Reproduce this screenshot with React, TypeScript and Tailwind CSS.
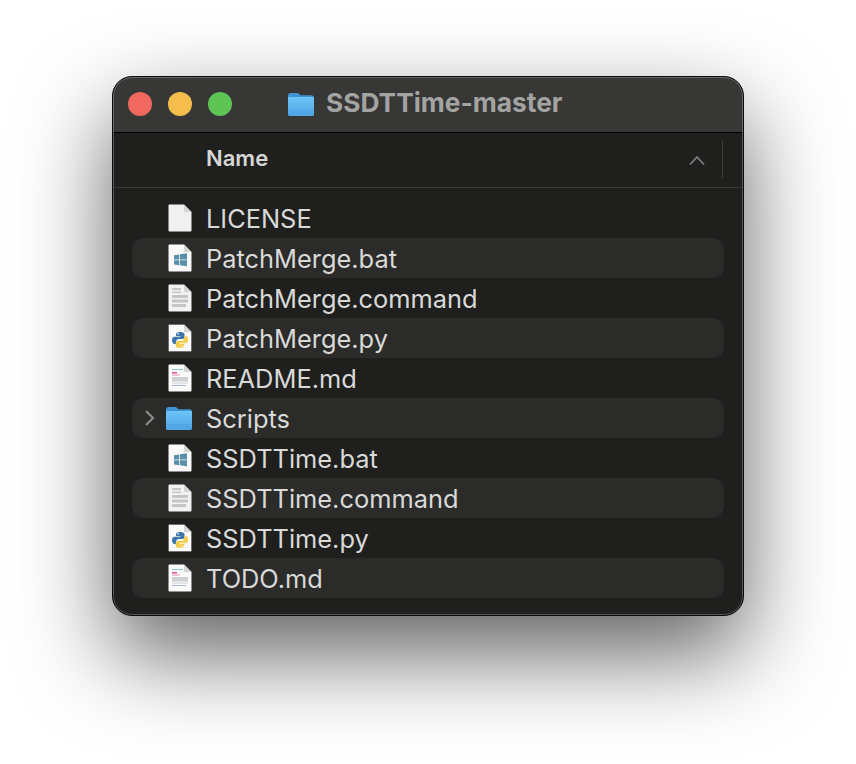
import React from 'react';

type IconKind = 'blank' | 'win' | 'text' | 'python' | 'markdown' | 'folder';

const files: { name: string; icon: IconKind }[] = [
    { name: 'LICENSE', icon: 'blank' },
    { name: 'PatchMerge.bat', icon: 'win' },
    { name: 'PatchMerge.command', icon: 'text' },
    { name: 'PatchMerge.py', icon: 'python' },
    { name: 'README.md', icon: 'markdown' },
    { name: 'Scripts', icon: 'folder' },
    { name: 'SSDTTime.bat', icon: 'win' },
    { name: 'SSDTTime.command', icon: 'text' },
    { name: 'SSDTTime.py', icon: 'python' },
    { name: 'TODO.md', icon: 'markdown' },
];

const FolderIcon = ({ className }: { className: string }) => (
    <svg className={className} viewBox="0 0 28 26">
        <defs>
            <linearGradient id="folderBody" x1="0" y1="0" x2="0" y2="1">
                <stop offset="0" stopColor="#6cc4f8" />
                <stop offset="1" stopColor="#4ea6e6" />
            </linearGradient>
        </defs>
        <path d="M1 4.5C1 3 2 2 3.5 2H10c1 0 1.5.4 2.2 1l1.3 1.2H24.5C26 4.2 27 5.2 27 6.7V23c0 1.2-.9 2-2 2H3c-1.100 0-2-.8-2-2z" fill="#3f94d8" />
        <path d="M1 7.500C1 6.700 1.700 6 2.500 6h23c.8 0 1.500.7 1.500 1.500V23c0 1.200-.9 2-2 2H3c-1.100 0-2-.8-2-2z" fill="url(#folderBody)" />
        <rect x="1" y="19.500" width="26" height="0.700" fill="#3f94d8" opacity="0.6" />
        <rect x="1" y="21.800" width="26" height="0.700" fill="#3f94d8" opacity="0.5" />
    </svg>
);

const FileIcon = ({ kind }: { kind: IconKind }) => {
    const outline = kind === 'python' ? '#6f6f6f' : 'none';
    return (
        <svg className="w-6 h-7" viewBox="0 0 24 28">
            <path
                d="M0.500 1.500C.5 1 1 .5 1.500 .5H16L23.500 8V26.500c0 .5-.5 1-1 1H1.500c-.5 0-1-.5-1-1z"
                fill={kind === 'blank' ? '#f0f0f0' : kind === 'text' ? '#f2f2f2' : '#fafafa'}
                stroke={outline}
                strokeWidth="1"
            />
            <path d="M16 .5V7c0 .6.4 1 1 1h6.500z" fill="#d4d4d4" />
            {kind === 'win' && (
                <path d="M6 11.200l5.200-.8v5h-5.200zM12 10.300l7-1v6.100h-7zM6 16.200h5.200v5l-5.200-.8zM12 16.200h7v6.100l-7-1z" fill="#5a8fac" />
            )}
            {kind === 'text' && (
                <g fill="#c6c6c6">
                    <rect x="4" y="4" width="9" height="2" />
                    <rect x="4" y="7.500" width="9" height="1.500" />
                    <rect x="4" y="11" width="16" height="3" />
                    <rect x="4" y="15.500" width="16" height="3" />
                    <rect x="4" y="20" width="14" height="3" />
                </g>
            )}
            {kind === 'markdown' && (
                <g>
                    <rect x="4" y="5" width="11" height="1" fill="#8fc6d8" />
                    <rect x="4" y="8" width="5" height="1.500" fill="#e0559a" />
                    <rect x="4" y="10.500" width="8" height="1" fill="#e48ab8" />
                    <rect x="4" y="13" width="16" height="4.500" fill="#cfcfd6" />
                    <rect x="4" y="18.500" width="16" height="1" fill="#c9d2cf" />
                    <rect x="4" y="21" width="14" height="1" fill="#a9b8e0" />
                </g>
            )}
            {kind === 'python' && (
                <g>
                    <path d="M12 8c-3.200 0-4 1-4 2.300V12h4.200v.7H6.800C5 12.700 4 14 4 16.200s1 3.700 2.600 3.700h1.500v-2.100c0-1.500 1.200-2.800 2.800-2.800h3.300c1.300 0 2.300-1 2.300-2.300v-2.400C16.500 9 15 8 12 8z" fill="#3a76a8" />
                    <path d="M12.200 24c3.200 0 4-1 4-2.300V20H12v-.7h5.400c1.800 0 2.800-1.300 2.800-3.500s-1-3.700-2.600-3.700h-1.500v2.100c0 1.500-1.200 2.800-2.800 2.800h-3.300c-1.300 0-2.300 1-2.300 2.300v2.400C7.700 23 9.200 24 12.200 24z" fill="#f5cf4f" />
                    <circle cx="10" cy="9.900" r="0.800" fill="#fafafa" />
                    <circle cx="14.200" cy="22.100" r="0.800" fill="#fafafa" />
                </g>
            )}
        </svg>
    );
};

export default function App() {
    return (
        <div className="w-[856px] h-[764px] bg-white pt-[76px] pl-[112px] overflow-hidden font-['Inter',sans-serif]">
            <div className="relative w-[632px] h-[540px] rounded-[20px] bg-[#1f201e] border border-[#0c0c0c] shadow-[0_38px_90px_rgba(0,0,0,0.62)] overflow-hidden flex flex-col">
                {/* Title bar */}
                <div className="h-14 shrink-0 bg-[#373736] border-b border-black flex items-center pl-[15px] pb-0.5">
                    <div className="flex gap-4">
                        <span className="w-6 h-6 rounded-full bg-[#f0685e]" />
                        <span className="w-6 h-6 rounded-full bg-[#f5bd4c]" />
                        <span className="w-6 h-6 rounded-full bg-[#5ec454]" />
                    </div>
                    <FolderIcon className="w-7 h-[26px] ml-[55px]" />
                    <span className="ml-[11px] pb-0.5 text-[26.3px] font-bold text-[#a3a3a2]">SSDTTime-master</span>
                </div>

                {/* Column header */}
                <div className="h-[55px] shrink-0 border-b border-[#3c3d3b] flex items-center pl-[93px] pb-0.5">
                    <span className="pb-0.5 text-[22px] font-semibold text-[#d6d6d5]">Name</span>
                    <svg className="w-5 h-4 ml-auto mr-[15px] mt-0.5" viewBox="0 0 20 16" fill="none" stroke="#7f7f7e" strokeWidth="1.800">
                        <path d="M3 12.500L10 5l7 7.500" />
                    </svg>
                    <span className="w-px h-[38px] bg-[#3f403e] mr-[20px]" />
                </div>

                {/* File rows */}
                <div className="pt-2.5 px-[19px] flex flex-col">
                    {files.map((file, i) => (
                        <div
                            key={file.name}
                            className={`h-10 shrink-0 rounded-xl flex items-center ${i % 2 === 1 ? 'bg-[#2b2b2a]' : ''}`}
                        >
                            <div className="w-[74px] shrink-0 flex items-center">
                                {file.icon === 'folder' ? (
                                    <>
                                        <svg className="w-3 h-[18px] ml-[12px]" viewBox="0 0 12 18" fill="none" stroke="#8b8b8a" strokeWidth="2.200">
                                            <path d="M2 2l7 7-7 7" />
                                        </svg>
                                        <FolderIcon className="w-7 h-[26px] ml-[9px]" />
                                    </>
                                ) : (
                                    <span className="ml-[36px] flex">
                                        <FileIcon kind={file.icon} />
                                    </span>
                                )}
                            </div>
                            <span className="pt-0.5 text-[25.4px] text-[#d9d9d8]">{file.name}</span>
                        </div>
                    ))}
                </div>

                {/* Light inner edge of the window */}
                <div className="absolute inset-0 rounded-[19px] border border-white/25 pointer-events-none" />
            </div>
        </div>
    );
}
